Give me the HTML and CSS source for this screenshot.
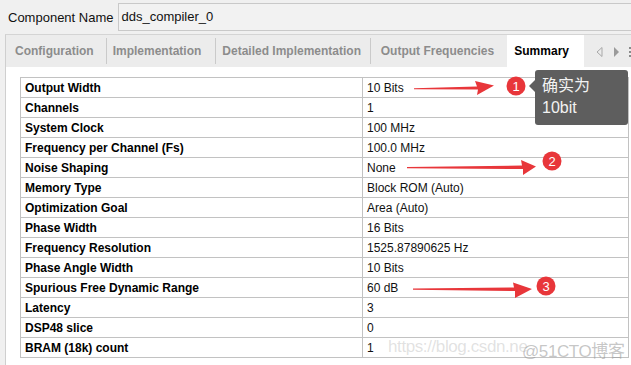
FILE: index.html
```html
<!DOCTYPE html>
<html>
<head>
    <title>Summary</title>
    <link rel="stylesheet" href="styles.css">
</head>
<body>
    <div class="name-row">
        <span class="name-label">Component Name</span>
        <div class="name-input">dds_compiler_0</div>
    </div>

    <div class="tab-panel">
        <div class="tab-bar">
            <div class="tab tab-config">Configuration</div>
            <div class="sep"></div>
            <div class="tab tab-impl">Implementation</div>
            <div class="sep"></div>
            <div class="tab tab-detail">Detailed Implementation</div>
            <div class="sep"></div>
            <div class="tab tab-freq">Output Frequencies</div>
            <div class="tab tab-summary">Summary</div>
            <div class="tab-nav">
                <svg width="45" height="33" viewBox="0 0 45 33">
                    <polygon points="16,12.5 11,17 16,21.5" fill="none" stroke="#a8a8a8" stroke-width="1"/>
                    <polygon points="28,12 33,17 28,22" fill="#9a9a9a"/>
                    <rect x="43" y="12" width="2" height="2" fill="#8a8a8a"/>
                    <rect x="43" y="16" width="2" height="2" fill="#8a8a8a"/>
                    <rect x="43" y="20" width="2" height="2" fill="#8a8a8a"/>
                </svg>
            </div>
        </div>

        <div class="tab-content">
            <table class="summary">
                <tr><th>Output Width</th><td>10 Bits</td></tr>
                <tr><th>Channels</th><td>1</td></tr>
                <tr><th>System Clock</th><td>100 MHz</td></tr>
                <tr><th>Frequency per Channel (Fs)</th><td>100.0 MHz</td></tr>
                <tr><th>Noise Shaping</th><td>None</td></tr>
                <tr><th>Memory Type</th><td>Block ROM (Auto)</td></tr>
                <tr><th>Optimization Goal</th><td>Area (Auto)</td></tr>
                <tr><th>Phase Width</th><td>16 Bits</td></tr>
                <tr><th>Frequency Resolution</th><td>1525.87890625 Hz</td></tr>
                <tr><th>Phase Angle Width</th><td>10 Bits</td></tr>
                <tr><th>Spurious Free Dynamic Range</th><td>60 dB</td></tr>
                <tr><th>Latency</th><td>3</td></tr>
                <tr><th>DSP48 slice</th><td>0</td></tr>
                <tr><th>BRAM (18k) count</th><td>1</td></tr>
            </table>
        </div>
    </div>

    <!-- annotations drawn over the screenshot -->
    <svg class="marks" width="631" height="365" viewBox="0 0 631 365">
        <polygon points="414,88.3 477,86.4 475,81 494,85.5 477,95 478,89.6 414,89.3" fill="#e8363a"/>
        <circle cx="516" cy="86" r="9.5" fill="#e8363a"/>
        <text x="516" y="90.5" class="mark-num">1</text>

        <polygon points="407,167 522,165.5 521,160 536,166.5 523,175 523,169 407,168.2" fill="#e8363a"/>
        <circle cx="552" cy="161" r="9.5" fill="#e8363a"/>
        <text x="552" y="165.5" class="mark-num">2</text>

        <polygon points="413,288.6 514,287.5 513,282.5 532,289 515,298 515,291 413,289.8" fill="#e8363a"/>
        <circle cx="546" cy="286" r="9.5" fill="#e8363a"/>
        <text x="546" y="290.5" class="mark-num">3</text>
    </svg>

    <div class="note">确实为<br>10bit</div>

    <div class="watermark wm-csdn">https://blog.csdn.ne</div>
    <div class="watermark wm-cto">@51CTO博客</div>
</body>
</html>
```

FILE: styles.css
```css
body {
    margin: 0;
    width: 631px;
    height: 365px;
    overflow: hidden;
    position: relative;
    background-color: #f0f0f0;
    font-family: "Liberation Sans", Arial, sans-serif;
    font-size: 12px;
    color: #000;
}
.name-row {
    display: flex;
    align-items: center;
    height: 34px;
    padding-left: 8px;
}
.name-label {
    font-size: 13px;
    color: #111;
}
.name-input {
    flex: 1;
    margin-left: 4px;
    height: 26px;
    line-height: 26px;
    padding-left: 3px;
    border: 1px solid #c9c9c9;
    border-right: none;
    background-color: #f2f2f2;
    font-size: 13px;
    color: #111;
}
.tab-panel {
    margin-left: 5px;
    border-left: 1px solid #cfcfcf;
    border-top: 1px solid #d4d4d4;
}
.tab-bar {
    display: flex;
    align-items: center;
    height: 32px;
    background-color: #ececec;
}
.tab {
    height: 32px;
    line-height: 32px;
    font-weight: bold;
    color: #8c8c8c;
    white-space: nowrap;
    box-sizing: border-box;
}
.tab-config {
    width: 100px;
    padding-left: 9px;
}
.tab-impl {
    width: 109px;
    padding-left: 6px;
}
.tab-detail {
    width: 154px;
    padding-left: 6px;
}
.tab-freq {
    width: 137px;
    padding-left: 10px;
}
.sep {
    width: 1px;
    height: 26px;
    background-color: #cacaca;
}
.tab-summary {
    width: 77px;
    padding-left: 7px;
    background-color: #fff;
    color: #000;
}
.tab-nav {
    display: flex;
    margin-left: 2px;
}
.tab-content {
    background-color: #fff;
    padding: 10px 0 20px 14px;
}
.summary {
    border-collapse: collapse;
    width: 609px;
}
.summary th,
.summary td {
    height: 18px;
    padding: 1px 0 0 4px;
    border: 1px solid #c2c2c2;
    text-align: left;
    white-space: nowrap;
}
.summary th {
    width: 337px;
    font-weight: bold;
}
.summary td {
    color: #111;
}
.marks {
    position: absolute;
    left: 0;
    top: 0;
    pointer-events: none;
}
.mark-num {
    fill: #fff;
    font-family: "Liberation Sans", Arial, sans-serif;
    font-size: 13px;
    text-anchor: middle;
}
.note {
    position: absolute;
    left: 535px;
    top: 70px;
    width: 93px;
    height: 55px;
    padding: 5px 0 0 7px;
    box-sizing: border-box;
    background-color: #5e5e5e;
    border-radius: 3px;
    color: #f2f2f2;
    font-family: "Liberation Sans", "Noto Sans CJK SC", sans-serif;
    font-size: 16px;
    line-height: 22px;
}
.note::before {
    content: "";
    position: absolute;
    left: -6px;
    top: 10px;
    border-top: 6px solid transparent;
    border-bottom: 6px solid transparent;
    border-right: 6px solid #5e5e5e;
}
.watermark {
    position: absolute;
    top: 337px;
    font-family: "Liberation Sans", "Noto Sans CJK SC", sans-serif;
    font-size: 17px;
    letter-spacing: -0.4px;
    white-space: nowrap;
    pointer-events: none;
}
.wm-csdn {
    left: 388px;
    color: rgba(170, 170, 170, 0.35);
}
.wm-cto {
    left: 522px;
    color: rgba(150, 150, 150, 0.55);
}
```
